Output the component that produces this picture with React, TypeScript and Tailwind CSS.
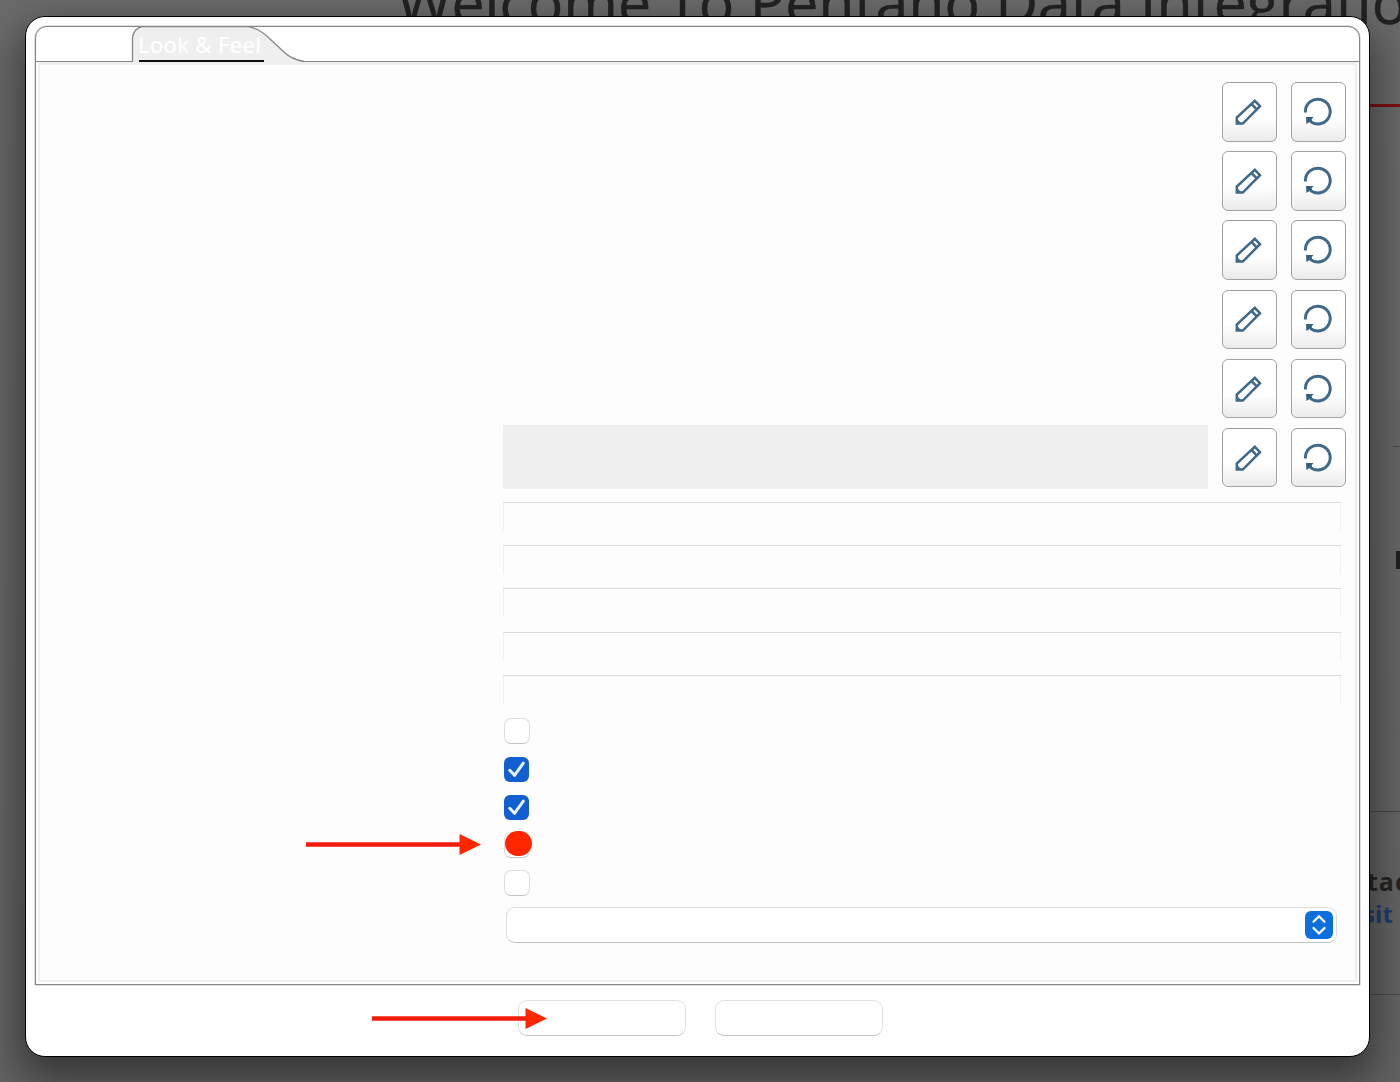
import React from "react";

const rows = [0, 1, 2, 3, 4, 5];

function Pencil() {
  return (
    <svg className="-ml-[3px]" width="28" height="28" viewBox="0 0 28 28" fill="none" stroke="#41698a" strokeWidth="2.5" strokeLinejoin="miter">
      <path d="M2.8 25.6V19.5L20.8 2.8L26 8.2L8.8 25.6Z" />
      <path d="M17.5 6L22.7 11.3" />
      <path d="M2.5 21L7 25.5H2.5Z" fill="#41698a" strokeWidth="1" />
    </svg>
  );
}

function Reset() {
  return (
    <svg width="30" height="30" viewBox="0 0 30 30" fill="none">
      <path d="M2.4 15.5V14.6A12.4 12.4 0 1 1 7.5 24.6" stroke="#41698a" strokeWidth="3" />
      <path d="M3 20H10.5L8.6 22.6L9.5 25.5L7 24.8L3.4 27Z" fill="#34607f" />
    </svg>
  );
}

function ToolButton({ children }: { children: React.ReactNode }) {
  return (
    <button className="flex h-[59.5px] w-[54.5px] items-center justify-center rounded-[6px] border border-[#a2a2a2] bg-linear-to-b from-white from-60% to-[#ebebeb]">
      {children}
    </button>
  );
}

function Check({ on, marked }: { on?: boolean; marked?: boolean }) {
  if (on)
    return (
      <div className="relative top-px mb-[13px] flex h-[25px] w-[25px] items-center justify-center rounded-[6px] bg-[#1260d0]">
        <svg width="25" height="25" viewBox="0 0 25 25" fill="none" stroke="#eaf4ff" strokeWidth="3" strokeLinecap="round" strokeLinejoin="round">
          <path d="M5.8 13.3L10.5 18.3L19.3 6.2" />
        </svg>
      </div>
    );
  return (
    <div className="relative mb-[12px] h-[26px] w-[26px] rounded-[7px] border border-[#dedede] border-b-[#c4c4c4] bg-white">
      {marked && <div className="absolute -top-[2px] left-0 h-[25px] w-[27px] rounded-full bg-[#ff2600]" />}
    </div>
  );
}

function Arrow() {
  return (
    <svg width="176" height="22" viewBox="0 0 176 22">
      <path d="M0 10.5H155" stroke="#f31c0a" strokeWidth="4.6" />
      <path d="M153.5 0L175 10.5L153.5 21Z" fill="#ff2600" />
    </svg>
  );
}

function Backdrop() {
  return (
    <div className="absolute inset-0 bg-linear-to-b from-[#6a6a6a] to-[#636363] font-['Open_Sans',sans-serif]">
      <div className="absolute -top-[38px] left-[397px] text-[59px] leading-[78px] whitespace-nowrap text-[#222] [-webkit-text-stroke:0.5px_#222]">Welcome To Pentaho Data Integration</div>
      <div className="absolute top-[104px] right-0 h-[3px] w-[40px] bg-[#7d1013]" />
      <div className="absolute top-[446px] right-0 h-px w-[7px] bg-[#484848]" />
      <div className="absolute top-[551px] right-0 h-[18px] w-[4px] bg-[#222]" />
      <div className="absolute top-[811px] right-0 h-px w-[40px] bg-[#484848]" />
      <div className="absolute top-[994px] right-0 h-px w-[40px] bg-[#484848]" />
      <div className="absolute top-[864px] left-[1367px] text-[25px] leading-[34px] font-bold tracking-[1px] whitespace-nowrap text-[#252525]">tact</div>
      <div className="absolute top-[897px] left-[1363px] text-[24px] leading-[34px] font-bold tracking-[0.1px] whitespace-nowrap text-[#1d3e70]">sit</div>
    </div>
  );
}

export default function App() {
  return (
    <div className="relative h-[1082px] w-[1400px] overflow-hidden pt-[16px] pl-[25px]">
      <Backdrop />
      <main className="relative flex h-[1041px] w-[1345px] flex-col rounded-[20px] border border-black bg-[#fefefe] px-[9px] pt-[9px] shadow-[0_18px_40px_6px_rgba(0,0,0,0.45)]">
        <section className="flex h-[959px] flex-col rounded-t-[12px] border border-[#858585] bg-white shadow-[0_0_0_0.5px_#bdbdbd]">
          <header className="flex h-[35px] shrink-0 border-b border-[#858585]">
            <div className="relative ml-[95px] h-[36px] w-[174px]">
              <svg className="absolute -top-px left-0" width="174" height="37" viewBox="0 0 174 37">
                <path d="M1 37V12Q2 3 11 .5H117C126 2 133 7 139 13L153 26C158 31 164 34 173 35.5V37Z" fill="#efefef" />
                <path d="M1.5 36V12Q2 3 11 .5H117C126 2 133 7 139 13L153 26C158 31 164 34 173 35.5" fill="none" stroke="#858585" strokeWidth="1.3" />
              </svg>
              <div className="absolute top-[4px] left-[8px] h-[31px] w-[125px] border-b-2 border-[#111] font-['Noto_Sans',sans-serif] text-[22px] leading-[26px] tracking-[0.35px] whitespace-nowrap text-white">
                <span className="-ml-px">Look &amp; Feel</span>
              </div>
            </div>
          </header>
          <div className="mx-[2px] mb-[2px] grow border-2 border-t-3 border-[#efefef] bg-[#fdfdfd]">
            <div className="relative ml-[463px] w-[844px] pt-[17px]">
              <div className="absolute top-[360px] left-0 h-[64px] w-[705px] bg-[#efefef]" />
              <div className="ml-[719px] flex w-[124px] flex-col gap-[9.7px]">
                {rows.map((r) => (
                  <div key={r} className="flex gap-[14.5px]">
                    <ToolButton><Pencil /></ToolButton>
                    <ToolButton><Reset /></ToolButton>
                  </div>
                ))}
              </div>
              <div className="mt-[14.5px] flex w-[838px] flex-col">
                {[0, 1, 2, 3, 4].map((r) => (
                  <div key={r} className="h-[43.2px] border-t border-[#dcdcdc]">
                    <div className="h-[28px] border-x border-[#f2f2f2]" />
                  </div>
                ))}
              </div>
              <div className="mt-[0.5px] ml-[1px] flex flex-col">
                <Check />
                <Check on />
                <Check on />
                <Check marked />
                <Check />
              </div>
              <div className="-mt-[1.5px] ml-[2.5px] flex h-[36.5px] w-[831px] items-center justify-end rounded-[9px] border border-[#dedede] border-b-[#c0c0c0] bg-white pr-[3px]">
                <svg width="28" height="28" viewBox="0 0 28 28" fill="none" stroke="white" strokeWidth="2.3" strokeLinecap="round" strokeLinejoin="round">
                  <rect width="28" height="28" rx="6" fill="#0d6fdb" stroke="none" />
                  <path d="M8.5 10.8L14 5.3L19.5 10.8M8.5 17L14 22.5L19.5 17" />
                </svg>
              </div>
            </div>
          </div>
        </section>
        <footer className="mt-[15px] flex gap-[29px] pl-[483px]">
          <button className="h-[36px] w-[168px] rounded-[9px] border border-[#e2e2e2] border-b-[#c4c4c4] bg-[#fefefe]" />
          <button className="h-[36px] w-[168px] rounded-[9px] border border-[#e2e2e2] border-b-[#c4c4c4] bg-[#fefefe]" />
        </footer>
      </main>
      <div className="absolute top-[834px] left-[306px]"><Arrow /></div>
      <div className="absolute top-[1008px] left-[372px]"><Arrow /></div>
    </div>
  );
}
